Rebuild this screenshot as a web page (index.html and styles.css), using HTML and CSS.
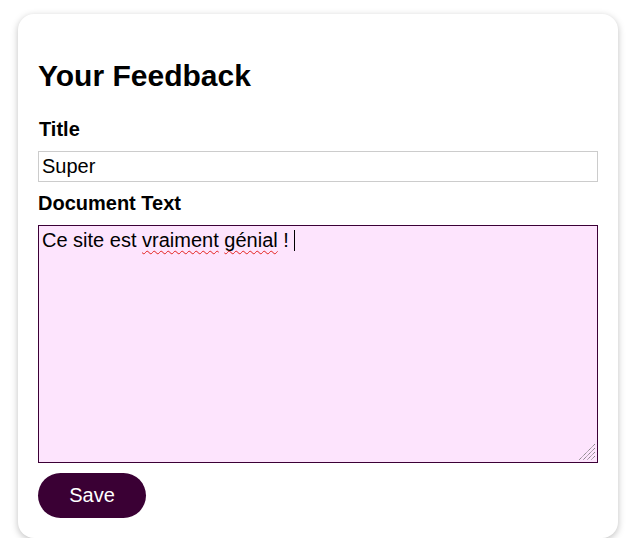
FILE: index.html
```html
<!DOCTYPE html>
<html lang="fr">
<head>
<meta charset="utf-8">
<title>Your Feedback</title>
<link rel="stylesheet" href="styles.css">
</head>
<body>
<form class="card">
  <h2 class="heading">Your Feedback</h2>
  <label class="label" for="title">Title</label>
  <input class="field" id="title" type="text" value="Super">
  <label class="label label-doc">Document Text</label>
  <div class="textbox" role="textbox" aria-multiline="true"><span>Ce site est </span><span class="misspelled">vraiment</span><span> </span><span class="misspelled">génial</span><span> ! </span><span class="caret"></span><svg class="grip" width="18" height="18" viewBox="0 0 18 18"><path d="M17 5 L5 17 M17 9 L9 17 M17 13 L13 17 M17 1 L1 17" stroke="#777" stroke-width="1" stroke-dasharray="1.2 0.6" fill="none"/></svg></div>
  <button class="save" type="button">Save</button>
</form>
</body>
</html>
```

FILE: styles.css
```css
html, body {
  margin: 0;
  padding: 0;
  background: #ffffff;
}
body {
  padding: 14px 0 0 18px;
  font-family: "Liberation Sans", Arial, sans-serif;
  color: #000;
}
.card {
  box-sizing: border-box;
  width: 600px;
  padding: 20px;
  background: #fff;
  border-radius: 16px;
  box-shadow: 0 2px 7px rgba(0, 0, 0, 0.25);
  display: flex;
  flex-direction: column;
  align-items: flex-start;
}
.heading {
  font-size: 30px;
  font-weight: bold;
  margin: 25px 0 25px;
  line-height: normal;
}
.label {
  display: block;
  font-size: 20px;
  font-weight: bold;
  line-height: 23px;
  margin: 0 0 10px 1px;
}
.label-doc {
  margin: 0 0 10px 0;
}
.field {
  box-sizing: border-box;
  width: 560px;
  height: 31px;
  margin: 0 0 10px;
  padding: 3px;
  font-family: "Liberation Sans", Arial, sans-serif;
  font-size: 20px;
  line-height: 23px;
  border: 1px solid #cccccc;
  border-radius: 0;
  color: #000;
  outline: none;
}
.textbox {
  position: relative;
  box-sizing: border-box;
  width: 560px;
  height: 238px;
  margin: 0 0 10px;
  padding: 3px;
  font-size: 20px;
  line-height: 23px;
  background: #fde4fd;
  border: 1px solid #3b0036;
  white-space: pre-wrap;
}
.misspelled {
  text-decoration: underline wavy #e3201c;
  text-decoration-thickness: 1px;
  text-decoration-skip-ink: none;
  text-underline-offset: 3px;
}
.caret {
  display: inline-block;
  width: 1px;
  height: 21px;
  background: #000;
  vertical-align: -4px;
}
.grip {
  position: absolute;
  right: 1px;
  bottom: 1px;
}
.save {
  box-sizing: border-box;
  width: 108px;
  height: 45px;
  padding: 0;
  border: none;
  border-radius: 23px;
  background: #3a0034;
  color: #fff;
  font-family: "Liberation Sans", Arial, sans-serif;
  font-size: 20px;
  line-height: 23px;
  cursor: pointer;
}
```
